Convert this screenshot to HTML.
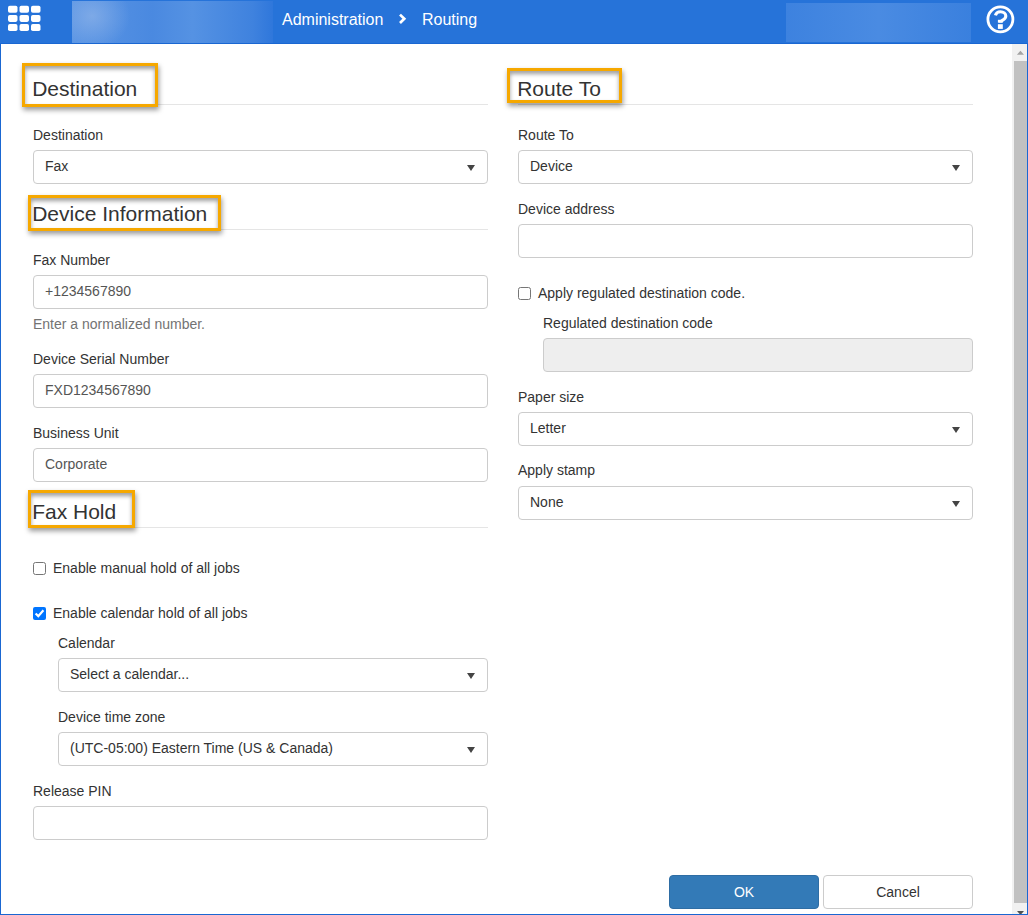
<!DOCTYPE html>
<html><head><meta charset="utf-8"><style>
html,body{margin:0;padding:0;width:1028px;height:915px;overflow:hidden;background:#fff;position:relative}
.t{position:absolute;white-space:pre;font-family:"Liberation Sans",sans-serif}
</style></head><body>
<div style="position:absolute;left:0px;top:0px;width:1028px;height:44px;background:#2673d9"></div>
<div style="position:absolute;left:0px;top:43px;width:1028px;height:1px;background:#1a67d2"></div>
<div style="position:absolute;left:72px;top:1px;width:201px;height:42px;background:radial-gradient(ellipse 38px 34px at 20px 15px, rgba(135,175,232,.8), rgba(135,175,232,0)), linear-gradient(90deg,#5a95e4 0%,#4a89e0 40%,#5592e3 60%,#3f82de 90%,#2f77db 100%)"></div>
<div style="position:absolute;left:786px;top:3px;width:185px;height:39px;background:linear-gradient(90deg,#3d82df 0%,#4a8be2 50%,#3a80de 100%)"></div>
<svg style="position:absolute;left:0;top:0" width="50" height="44"><rect x="8" y="5.7" width="9.5" height="7" rx="1.8" fill="#fff"/><rect x="8" y="14.9" width="9.5" height="7" rx="1.8" fill="#fff"/><rect x="8" y="24.1" width="9.5" height="7" rx="1.8" fill="#fff"/><rect x="19.5" y="5.7" width="9.5" height="7" rx="1.8" fill="#fff"/><rect x="19.5" y="14.9" width="9.5" height="7" rx="1.8" fill="#fff"/><rect x="19.5" y="24.1" width="9.5" height="7" rx="1.8" fill="#fff"/><rect x="31" y="5.7" width="9.5" height="7" rx="1.8" fill="#fff"/><rect x="31" y="14.9" width="9.5" height="7" rx="1.8" fill="#fff"/><rect x="31" y="24.1" width="9.5" height="7" rx="1.8" fill="#fff"/></svg>
<div class="t" style="left:282px;top:9px;font-size:16px;line-height:22px;color:#fff;">Administration</div>
<svg style="position:absolute;left:397px;top:11.5px" width="12" height="14"><path d="M3 2.6L7.3 6.8L3 11" stroke="#fff" stroke-width="2.7" fill="none"/></svg>
<div class="t" style="left:422px;top:9px;font-size:16px;line-height:22px;color:#fff;">Routing</div>
<svg style="position:absolute;left:984px;top:3px" width="33" height="33"><circle cx="16.4" cy="16.3" r="12.5" stroke="#fff" stroke-width="2.8" fill="none"/><path d="M11.4 12.4C12.1 10 14 8.8 16.4 8.8C19.5 8.8 21.8 10.6 21.8 13.1C21.8 15.3 20.3 16.3 18.8 17.1C17.2 18 16.4 18.4 16.4 19.6" stroke="#fff" stroke-width="3.1" fill="none"/><rect x="13.9" y="16.8" width="4.9" height="2.9" fill="#fff"/><rect x="13.9" y="21.2" width="4.9" height="4.7" fill="#fff"/></svg>
<div style="position:absolute;left:33px;top:104px;width:455px;height:1px;background:#e5e5e5"></div>
<div class="t" style="left:32.2px;top:75px;font-size:21px;line-height:27px;color:#333;">Destination</div>
<div style="position:absolute;left:22px;top:63px;width:136px;height:44px;box-sizing:border-box;border:3px solid #f6a800;box-shadow:1px 3px 5px rgba(0,0,0,.4), inset 0 3px 4px rgba(0,0,0,.38)"></div>
<div class="t" style="left:33px;top:125px;font-size:14px;line-height:20px;color:#333;">Destination</div>
<div style="position:absolute;left:33px;top:150px;width:455px;height:34px;box-sizing:border-box;border:1px solid #ccc;border-radius:4px;background:#fff"></div>
<div class="t" style="left:45px;top:156px;font-size:14px;line-height:20px;color:#333;">Fax</div>
<svg style="position:absolute;left:466.5px;top:165px" width="8" height="6"><path d="M0 0H8L4 6Z" fill="#444"/></svg>
<div style="position:absolute;left:33px;top:229px;width:455px;height:1px;background:#e5e5e5"></div>
<div class="t" style="left:32.2px;top:200px;font-size:21px;line-height:27px;color:#333;">Device Information</div>
<div style="position:absolute;left:28px;top:195px;width:193px;height:36px;box-sizing:border-box;border:3px solid #f6a800;box-shadow:1px 3px 5px rgba(0,0,0,.4), inset 0 3px 4px rgba(0,0,0,.38)"></div>
<div class="t" style="left:33px;top:250px;font-size:14px;line-height:20px;color:#333;">Fax Number</div>
<div style="position:absolute;left:33px;top:275px;width:455px;height:34px;box-sizing:border-box;border:1px solid #ccc;border-radius:4px;background:#fff"></div>
<div class="t" style="left:45px;top:281px;font-size:14px;line-height:20px;color:#555;">+1234567890</div>
<div class="t" style="left:33px;top:314px;font-size:14px;line-height:20px;color:#737373;">Enter a normalized number.</div>
<div class="t" style="left:33px;top:349px;font-size:14px;line-height:20px;color:#333;">Device Serial Number</div>
<div style="position:absolute;left:33px;top:374px;width:455px;height:34px;box-sizing:border-box;border:1px solid #ccc;border-radius:4px;background:#fff"></div>
<div class="t" style="left:45px;top:380px;font-size:14px;line-height:20px;color:#555;">FXD1234567890</div>
<div class="t" style="left:33px;top:423px;font-size:14px;line-height:20px;color:#333;">Business Unit</div>
<div style="position:absolute;left:33px;top:448px;width:455px;height:34px;box-sizing:border-box;border:1px solid #ccc;border-radius:4px;background:#fff"></div>
<div class="t" style="left:45px;top:454px;font-size:14px;line-height:20px;color:#555;">Corporate</div>
<div style="position:absolute;left:33px;top:527px;width:455px;height:1px;background:#e5e5e5"></div>
<div class="t" style="left:32.2px;top:498px;font-size:21px;line-height:27px;color:#333;">Fax Hold</div>
<div style="position:absolute;left:28px;top:490px;width:107px;height:38px;box-sizing:border-box;border:3px solid #f6a800;box-shadow:1px 3px 5px rgba(0,0,0,.4), inset 0 3px 4px rgba(0,0,0,.38)"></div>
<svg style="position:absolute;left:33px;top:562px" width="13" height="13"><rect x="0.5" y="0.5" width="12" height="12" rx="2" fill="#fff" stroke="#767676"/></svg>
<div class="t" style="left:53px;top:558px;font-size:14px;line-height:20px;color:#333;">Enable manual hold of all jobs</div>
<svg style="position:absolute;left:33px;top:607px" width="13" height="13"><rect x="0" y="0" width="13" height="13" rx="2" fill="#0075ff"/><path d="M2.6 6.5L5.3 9.1L10.4 3.2" stroke="#fff" stroke-width="2.2" fill="none"/></svg>
<div class="t" style="left:53px;top:603px;font-size:14px;line-height:20px;color:#333;">Enable calendar hold of all jobs</div>
<div class="t" style="left:58px;top:633px;font-size:14px;line-height:20px;color:#333;">Calendar</div>
<div style="position:absolute;left:58px;top:658px;width:430px;height:34px;box-sizing:border-box;border:1px solid #ccc;border-radius:4px;background:#fff"></div>
<div class="t" style="left:70px;top:664px;font-size:14px;line-height:20px;color:#333;">Select a calendar...</div>
<svg style="position:absolute;left:466.5px;top:673px" width="8" height="6"><path d="M0 0H8L4 6Z" fill="#444"/></svg>
<div class="t" style="left:58px;top:707px;font-size:14px;line-height:20px;color:#333;">Device time zone</div>
<div style="position:absolute;left:58px;top:732px;width:430px;height:34px;box-sizing:border-box;border:1px solid #ccc;border-radius:4px;background:#fff"></div>
<div class="t" style="left:70px;top:738px;font-size:14px;line-height:20px;color:#333;">(UTC-05:00) Eastern Time (US &amp; Canada)</div>
<svg style="position:absolute;left:466.5px;top:747px" width="8" height="6"><path d="M0 0H8L4 6Z" fill="#444"/></svg>
<div class="t" style="left:33px;top:781px;font-size:14px;line-height:20px;color:#333;">Release PIN</div>
<div style="position:absolute;left:33px;top:806px;width:455px;height:34px;box-sizing:border-box;border:1px solid #ccc;border-radius:4px;background:#fff"></div>
<div style="position:absolute;left:518px;top:104px;width:455px;height:1px;background:#e5e5e5"></div>
<div class="t" style="left:517.2px;top:75px;font-size:21px;line-height:27px;color:#333;">Route To</div>
<div style="position:absolute;left:507px;top:68px;width:115px;height:35px;box-sizing:border-box;border:3px solid #f6a800;box-shadow:1px 3px 5px rgba(0,0,0,.4), inset 0 3px 4px rgba(0,0,0,.38)"></div>
<div class="t" style="left:518px;top:125px;font-size:14px;line-height:20px;color:#333;">Route To</div>
<div style="position:absolute;left:518px;top:150px;width:455px;height:34px;box-sizing:border-box;border:1px solid #ccc;border-radius:4px;background:#fff"></div>
<div class="t" style="left:530px;top:156px;font-size:14px;line-height:20px;color:#333;">Device</div>
<svg style="position:absolute;left:951.5px;top:165px" width="8" height="6"><path d="M0 0H8L4 6Z" fill="#444"/></svg>
<div class="t" style="left:518px;top:199px;font-size:14px;line-height:20px;color:#333;">Device address</div>
<div style="position:absolute;left:518px;top:224px;width:455px;height:34px;box-sizing:border-box;border:1px solid #ccc;border-radius:4px;background:#fff"></div>
<svg style="position:absolute;left:518px;top:287px" width="13" height="13"><rect x="0.5" y="0.5" width="12" height="12" rx="2" fill="#fff" stroke="#767676"/></svg>
<div class="t" style="left:538px;top:283px;font-size:14px;line-height:20px;color:#333;">Apply regulated destination code.</div>
<div class="t" style="left:543px;top:313px;font-size:14px;line-height:20px;color:#333;">Regulated destination code</div>
<div style="position:absolute;left:543px;top:338px;width:430px;height:34px;box-sizing:border-box;border:1px solid #ccc;border-radius:4px;background:#eee"></div>
<div class="t" style="left:518px;top:387px;font-size:14px;line-height:20px;color:#333;">Paper size</div>
<div style="position:absolute;left:518px;top:412px;width:455px;height:34px;box-sizing:border-box;border:1px solid #ccc;border-radius:4px;background:#fff"></div>
<div class="t" style="left:530px;top:418px;font-size:14px;line-height:20px;color:#333;">Letter</div>
<svg style="position:absolute;left:951.5px;top:427px" width="8" height="6"><path d="M0 0H8L4 6Z" fill="#444"/></svg>
<div class="t" style="left:518px;top:460px;font-size:14px;line-height:20px;color:#333;">Apply stamp</div>
<div style="position:absolute;left:518px;top:486px;width:455px;height:34px;box-sizing:border-box;border:1px solid #ccc;border-radius:4px;background:#fff"></div>
<div class="t" style="left:530px;top:492px;font-size:14px;line-height:20px;color:#333;">None</div>
<svg style="position:absolute;left:951.5px;top:501px" width="8" height="6"><path d="M0 0H8L4 6Z" fill="#444"/></svg>
<div style="position:absolute;left:669px;top:875px;width:150px;height:34px;box-sizing:border-box;background:#337ab7;border:1px solid #2e6da4;border-radius:4px"></div>
<div class="t" style="left:669px;top:877px;width:150px;text-align:center;font-size:14px;line-height:20px;color:#fff;top:882px">OK</div>
<div style="position:absolute;left:823px;top:875px;width:150px;height:34px;box-sizing:border-box;background:#fff;border:1px solid #ccc;border-radius:4px"></div>
<div class="t" style="left:823px;width:150px;text-align:center;font-size:14px;line-height:20px;color:#333;top:882px">Cancel</div>
<div style="position:absolute;left:1012px;top:44px;width:15px;height:870px;background:#f1f1f1"></div>
<div style="position:absolute;left:1014px;top:61px;width:12.7px;height:842px;background:#c1c1c1"></div>
<svg style="position:absolute;left:1012px;top:49px" width="15" height="8"><path d="M4.9 5.7H12L8.45 1.8Z" fill="#a3a3a3"/></svg>
<svg style="position:absolute;left:1012px;top:909px" width="15" height="6"><path d="M5 2H12L8.5 6Z" fill="#505050"/></svg>
<div style="position:absolute;left:0px;top:44px;width:1px;height:871px;background:#1a67d2"></div>
<div style="position:absolute;left:1027px;top:44px;width:1px;height:871px;background:#1a67d2"></div>
<div style="position:absolute;left:0px;top:914px;width:1028px;height:1px;background:#1a67d2"></div>
</body></html>
